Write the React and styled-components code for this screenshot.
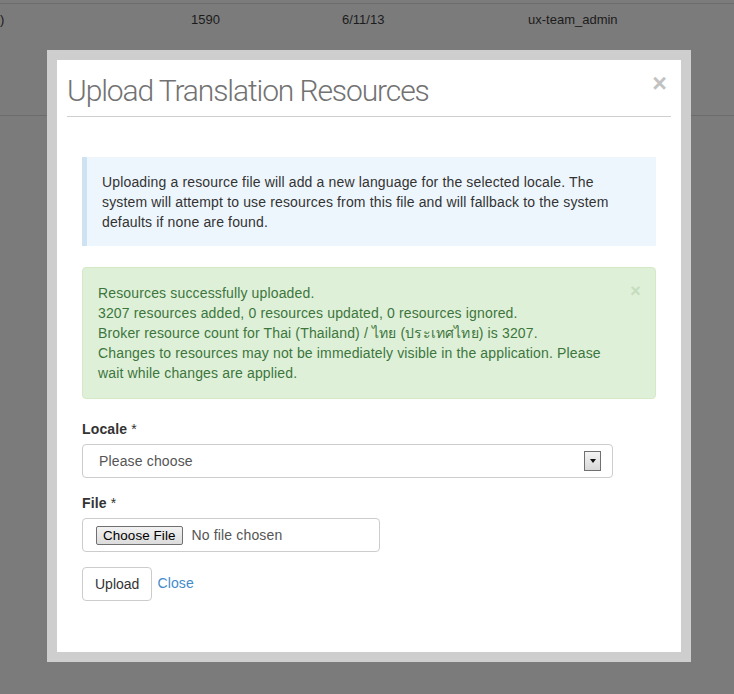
import React from "react";
import styled, { createGlobalStyle } from "styled-components";

const GlobalStyle = createGlobalStyle`
    html, body {
        margin: 0;
        padding: 0;
    }
    body {
        background: #7b7b7b;
        font-family: "Liberation Sans", Arial, sans-serif;
        font-size: 14px;
        line-height: 20px;
        letter-spacing: 0.15px;
        color: #333;
    }
`;

const Page = styled.div`
    position: relative;
    width: 734px;
    height: 694px;
    overflow: hidden;
`;

const Table = styled.div`
    border-top: 1px solid #6c6c6c;
    margin-top: 3px;
`;

const Row = styled.div`
    display: grid;
    grid-template-columns: 191px 151px 186px 1fr;
    height: 112px;
    padding-top: 6px;
    box-sizing: border-box;
    border-bottom: 1px solid #6c6c6c;
    font-size: 13px;
    letter-spacing: 0;
    color: #1c1c1c;
`;

const Cell = styled.div`
    white-space: nowrap;
`;

const Frame = styled.div`
    position: absolute;
    left: 47px;
    top: 50px;
    width: 644px;
    height: 612px;
    box-sizing: border-box;
    border: 10px solid #cecece;
    background: #fff;
`;

const Header = styled.div`
    display: flex;
    justify-content: space-between;
    align-items: flex-start;
    margin: 0 10px;
    padding: 11px 0 5px;
    border-bottom: 1px solid #cfcfcf;
`;

const Title = styled.h3`
    margin: 0;
    font-family: Roboto, "Liberation Sans", sans-serif;
    font-weight: 300;
    font-size: 30px;
    line-height: 40px;
    letter-spacing: -1.1px;
    color: #727272;
`;

const CloseX = styled.span`
    font-family: "Liberation Sans", Arial, sans-serif;
    font-size: 25px;
    font-weight: bold;
    line-height: 25px;
    margin: 0 4px 0 0;
    color: #c2c2c2;
`;

const Body = styled.div`
    padding: 40px 25px 0;
`;

const Info = styled.div`
    background: #eef6fd;
    border-left: 5px solid #cfe2f2;
    padding: 15px 20px 14px 15px;
`;

const Alert = styled.div`
    position: relative;
    margin-top: 21px;
    background: #dff0d8;
    border: 1px solid #d6e9c6;
    border-radius: 4px;
    padding: 15px 35px 15px 15px;
    color: #3c763d;
`;

const AlertClose = styled(CloseX)`
    position: absolute;
    top: 14px;
    right: 14px;
    margin: 0;
    font-size: 18px;
    line-height: 18px;
    color: #c5dcbd;
`;

const Group = styled.div`
    margin-top: ${(p) => p.top || 15}px;
`;

const Label = styled.label`
    display: block;
    font-weight: bold;
    margin-bottom: 5px;
    color: #333;
`;

const Req = styled.span`
    font-weight: normal;
`;

const Control = styled.div`
    display: flex;
    align-items: center;
    width: ${(p) => p.width}px;
    height: 34px;
    box-sizing: border-box;
    border: 1px solid #ccc;
    border-radius: 4px;
    padding: 0 12px 0 ${(p) => p.left || 12}px;
    color: #555;
    background: #fff;
`;

const SelectText = styled.span`
    flex: 1;
`;

const ArrowBox = styled.span`
    display: flex;
    align-items: center;
    justify-content: center;
    width: 15px;
    height: 18px;
    border: 1px solid #707070;
    background: linear-gradient(#f4f4f4, #d8d8d8);
    margin-right: -1px;
`;

const Triangle = styled.span`
    width: 0;
    height: 0;
    border-left: 3px solid transparent;
    border-right: 3px solid transparent;
    border-top: 4px solid #111;
`;

const FileButton = styled.span`
    display: inline-block;
    height: 19px;
    line-height: 17px;
    box-sizing: border-box;
    padding: 0 6px;
    border: 1px solid #707070;
    border-radius: 2px;
    background: linear-gradient(#f2f2f2, #dcdcdc);
    color: #000;
    font-size: 13.4px;
    letter-spacing: 0.1px;
    margin: 1px 9px 0 1px;
`;

const Actions = styled.div`
    display: flex;
    align-items: center;
    gap: 5px;
    margin-top: 15px;
`;

const Button = styled.button`
    height: 34px;
    padding: 0 12px;
    font-family: inherit;
    font-size: 14px;
    color: #333;
    background: #fff;
    border: 1px solid #ccc;
    border-radius: 4px;
`;

const Link = styled.a`
    color: #428bca;
    text-decoration: none;
    margin-top: -3px;
`;

export default function App() {
    return (
        <>
            <GlobalStyle />
            <Page>
                <Table>
                    <Row>
                        <Cell>)</Cell>
                        <Cell>1590</Cell>
                        <Cell>6/11/13</Cell>
                        <Cell>ux-team_admin</Cell>
                    </Row>
                </Table>

                <Frame>
                    <Header>
                        <Title>Upload Translation Resources</Title>
                        <CloseX>×</CloseX>
                    </Header>
                    <Body>
                        <Info>
                            Uploading a resource file will add a new language for the selected locale. The
                            system will attempt to use resources from this file and will fallback to the system
                            defaults if none are found.
                        </Info>
                        <Alert>
                            <AlertClose>×</AlertClose>
                            Resources successfully uploaded.
                            <br />
                            3207 resources added, 0 resources updated, 0 resources ignored.
                            <br />
                            Broker resource count for Thai (Thailand) / ไทย (ประเทศไทย) is 3207.
                            <br />
                            Changes to resources may not be immediately visible in the application. Please
                            wait while changes are applied.
                        </Alert>
                        <Group top={20}>
                            <Label>
                                Locale <Req>*</Req>
                            </Label>
                            <Control width={531} left={16}>
                                <SelectText>Please choose</SelectText>
                                <ArrowBox>
                                    <Triangle />
                                </ArrowBox>
                            </Control>
                        </Group>
                        <Group>
                            <Label>
                                File <Req>*</Req>
                            </Label>
                            <Control width={298}>
                                <FileButton>Choose File</FileButton>
                                No file chosen
                            </Control>
                        </Group>
                        <Actions>
                            <Button>Upload</Button>
                            <Link href="#">Close</Link>
                        </Actions>
                    </Body>
                </Frame>
            </Page>
        </>
    );
}
